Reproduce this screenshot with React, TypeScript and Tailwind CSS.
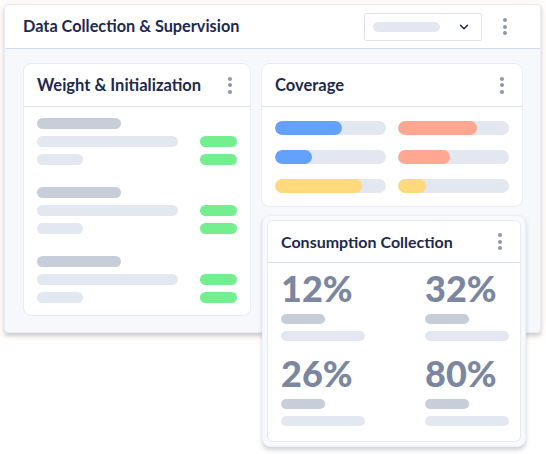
import React from 'react';
import { ChevronDown } from 'lucide-react';

const Dots = () => (
  <div className="flex flex-col items-center gap-[2.5px] w-[6px]">
    <span className="w-[4px] h-[4px] rounded-full bg-[#8e96ab]" />
    <span className="w-[4px] h-[4px] rounded-full bg-[#8e96ab]" />
    <span className="w-[4px] h-[4px] rounded-full bg-[#8e96ab]" />
  </div>
);

const Pill = ({ w, dark, green }: { w: string; dark?: boolean; green?: boolean }) => (
  <div
    className={`h-[11px] rounded-full ${w} ${
      green ? 'bg-[#73ef8f]' : dark ? 'bg-[#c7cdd9]' : 'bg-[#e3e7f0]'
    }`}
  />
);

const WeightGroup = () => (
  <div className="flex flex-col gap-[7px]">
    <Pill w="w-[84px]" dark />
    <div className="flex justify-between">
      <Pill w="w-[141px]" />
      <Pill w="w-[37px]" green />
    </div>
    <div className="flex justify-between">
      <Pill w="w-[46px]" />
      <Pill w="w-[37px]" green />
    </div>
  </div>
);

const Bar = ({ pct, color }: { pct: number; color: string }) => (
  <div className="h-[14px] w-[111px] rounded-full bg-[#e3e7f0] overflow-hidden">
    <div className={`h-full rounded-full ${color}`} style={{ width: `${pct}%` }} />
  </div>
);

const stats = ['12%', '32%', '26%', '80%'];

const CardHeader = ({ title }: { title: string }) => (
  <div className="h-[43px] pl-[13px] pr-[17px] flex items-center justify-between border-b border-[#d9dfec]">
    <h3 className="text-[16.5px] font-bold text-[#1d2a4e]">{title}</h3>
    <Dots />
  </div>
);

export default function App() {
  return (
    <div
      className="w-[546px] h-[454px] bg-white pl-[4px] pt-[4px]"
      style={{ fontFamily: 'Lato, "Open Sans", sans-serif' }}
    >
      <div className="w-[537px] h-[329px] rounded-[4px] border border-[#e8ebf2] bg-[#f6f8fc] shadow-[0_3px_4px_rgba(120,125,140,0.35),0_0_14px_rgba(255,190,160,0.25)]">
        {/* header */}
        <div className="h-[44px] bg-white rounded-t-[4px] border-b border-[#d3dbea] pl-[18px] pr-[32px] flex items-center justify-between">
          <h2 className="text-[16.3px] font-bold text-[#1d2a4e]">Data Collection &amp; Supervision</h2>
          <div className="flex items-center gap-[20px]">
            <div className="w-[118px] h-[28px] border border-[#dde2ea] rounded-[2px] flex items-center justify-between pl-[8px] pr-[10px]">
              <div className="w-[67px] h-[10px] rounded-full bg-[#e3e7f0]" />
              <ChevronDown size={14} strokeWidth={2.5} className="text-[#1d2a4e]" />
            </div>
            <Dots />
          </div>
        </div>

        {/* body */}
        <div className="flex gap-[10px] pl-[18px] pt-[14px]">
          <div className="w-[228px] h-[253px] bg-white rounded-[8px] border border-[#e8ebf2]">
            <CardHeader title="Weight & Initialization" />
            <div className="px-[13px] pt-[11px] flex flex-col gap-[22px]">
              <WeightGroup />
              <WeightGroup />
              <WeightGroup />
            </div>
          </div>

          <div className="w-[262px] flex flex-col">
            <div className="bg-white rounded-[8px] border border-[#e8ebf2]">
              <CardHeader title="Coverage" />
              <div className="px-[13px] pt-[14px] pb-[13px] grid grid-cols-[111px_111px] gap-x-[12px] gap-y-[15px]">
                <Bar pct={60} color="bg-[#64a1fb]" />
                <Bar pct={71} color="bg-[#ffa790]" />
                <Bar pct={33} color="bg-[#64a1fb]" />
                <Bar pct={47} color="bg-[#ffa790]" />
                <Bar pct={78} color="bg-[#ffd97b]" />
                <Bar pct={25} color="bg-[#ffd97b]" />
              </div>
            </div>

            <div className="mt-[8px] ml-[1px] w-[264px] p-[4px] rounded-[8px] bg-[#f8f9fc] border border-[#eef0f5] shadow-[0_3px_4px_rgba(120,125,140,0.35)]">
              <div className="bg-white rounded-[6px] border border-[#e6e9f1] h-[222px]">
                <div className="h-[42px] pl-[13px] pr-[17px] flex items-center justify-between border-b border-[#d9dfec]">
                  <h3 className="text-[16px] font-bold text-[#1d2a4e]">Consumption Collection</h3>
                  <Dots />
                </div>
                <div className="px-[13px] pt-[5px] grid grid-cols-[144px_1fr] gap-y-[12px]">
                  {stats.map((s) => (
                    <div key={s} className="flex flex-col">
                      <span className="text-[36px] leading-[40px] font-black text-[#7b86a0]">{s}</span>
                      <div className="mt-[6px] w-[44px] h-[10px] rounded-full bg-[#c7cdd9]" />
                      <div className="mt-[7px] w-[84px] h-[10px] rounded-full bg-[#e3e7f0]" />
                    </div>
                  ))}
                </div>
              </div>
            </div>
          </div>
        </div>
      </div>
    </div>
  );
}
